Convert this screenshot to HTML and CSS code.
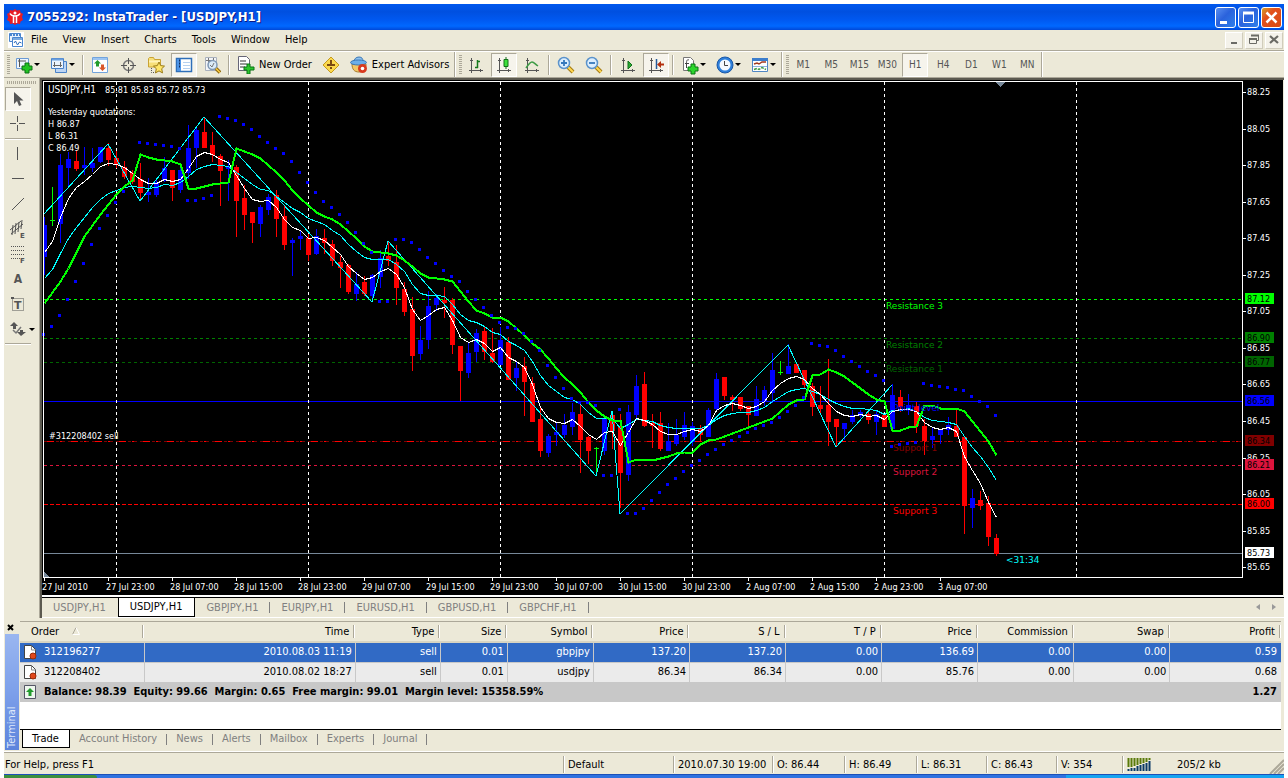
FILE: index.html
```html
<!DOCTYPE html>
<html lang="en">
<head>
<meta charset="utf-8">
<title>7055292: InstaTrader - [USDJPY,H1]</title>
<link rel="stylesheet" href="styles.css">
</head>
<body>
<div class="window">
  <header class="titlebar">
    <svg class="logo" width="16" height="16" viewBox="0 0 16 16"><path d="M8 0l2 1.500 3-.5.5 2.500L16 5l-1 3 1 3-2.500 1.500L13 15l-3-.5L8 16l-2-1.500L3 15l-.5-2.500L0 11l1-3-1-3 2.500-1.500L3 1l3 .5z" fill="#e81c24"/><circle cx="8" cy="4" r="1.500" fill="#fff"/><path d="M3 4.500c1 2 3 2.500 5 2.500s4-.5 5-2.500M6.500 7v7M9.500 7v7" stroke="#fff" stroke-width="1.500" fill="none"/></svg>
    <h1>7055292: InstaTrader - [USDJPY,H1]</h1>
    <div class="winbtns">
      <button class="wb" aria-label="Minimize"><svg width="19" height="19"><path d="M4 13h7v3H4z" fill="#fff"/></svg></button>
      <button class="wb" aria-label="Maximize"><svg width="19" height="19"><path d="M4.500 4v10.500h10V4" stroke="#fff" fill="none"/><path d="M4 5h11" stroke="#fff" stroke-width="3"/></svg></button>
      <button class="wb close" aria-label="Close"><svg width="19" height="19"><path d="M4.500 4.500l10 10M14.500 4.500l-10 10" stroke="#fff" stroke-width="2.500"/></svg></button>
    </div>
  </header>
  <nav class="menubar">
    <svg width="16" height="16"><rect width="16" height="16" fill="#fff"/><path d="M1.500 1.500h11v8h-11z" fill="#e8f1fc" stroke="#4a86cf"/><path d="M4.500 5.500h10v9h-10z" fill="#fff" stroke="#4a86cf"/><path d="M2 3h10" stroke="#4a86cf" stroke-width="2" stroke-dasharray="2 1"/><path d="M5 7h9" stroke="#7aaae0" stroke-width="2"/><path d="M6 11l1.500-2 2 4 2-3 2 1" stroke="#2e6dbd" fill="none"/></svg>
    <button>File</button><button>View</button><button>Insert</button><button>Charts</button><button>Tools</button><button>Window</button><button>Help</button>
    <div class="docbtns">
      <button aria-label="Minimize chart"><svg width="16" height="16"><path d="M5 10h6v2H5z" fill="#6b6b66"/></svg></button>
      <button aria-label="Restore chart"><svg width="16" height="16"><path d="M5.500 3.500h7v5h-2M3.500 7.500h7v4h-7z" fill="none" stroke="#6b6b66"/><path d="M5 3.500h8M3 7h8" stroke="#6b6b66" stroke-width="2"/></svg></button>
      <button aria-label="Close chart"><svg width="16" height="16"><path d="M4 4l8 7M12 4l-8 7" stroke="#6b6b66" stroke-width="2.200"/></svg></button>
    </div>
  </nav>

  <div class="toolbars">
    <div class="bar">
      <span class="grip"></span>
      <button class="dd" aria-label="New chart"><svg width="20" height="20"><path d="M2.500 3.500h12v10h-12z" fill="#eef5fd" stroke="#6b9ad4"/><path d="M4 6h8M5.500 4v8" stroke="#555"/><path d="M11 8h4v3h3v4h-3v3h-4v-3H8v-4h3z" fill="#22c422" stroke="#0a6e14"/></svg><i class="arr"></i></button>
      <button class="dd" aria-label="Profiles"><svg width="20" height="20"><path d="M6.500 6.500h11v11h-11z" fill="#bcd5f4" stroke="#4a82c8"/><path d="M2.500 3.500h12v10h-12z" fill="#eaf3fd" stroke="#4a82c8"/><path d="M3 4.500h11" stroke="#6ba0e0" stroke-width="2"/><path d="M4 10.500h9M5.500 7v5M11.500 7v5" stroke="#666"/></svg><i class="arr"></i></button>
      <span class="sep"></span>
      <button aria-label="Market Watch"><svg width="18" height="18"><path d="M1.500 1.500h15v15h-15z" fill="#fdfeff" stroke="#72a4dc"/><path d="M2 3h14" stroke="#9cc5f2" stroke-width="2"/><path d="M6.500 4l3.500 3.500H8v3H5v-3H3z" fill="#219b2b"/><path d="M11.500 15L8 11.500h2v-3h3v3h2z" fill="#d8572a"/></svg></button>
      <button aria-label="Data Window"><svg width="18" height="18"><circle cx="9.500" cy="9.500" r="5" fill="none" stroke="#777" stroke-width="1.500"/><path d="M9.500 2v6m0 3v6M2 9.500h6m3 0h6" stroke="#555"/></svg></button>
      <button aria-label="Navigator"><svg width="18" height="18"><path d="M1.500 11V2.500l1-1h4l1 2h6V11z" fill="#f7df78" stroke="#c9a334"/><path d="M2 5.500h11" stroke="#fff3b8" stroke-width="2"/><path d="M4.500 12v4.500H9" stroke="#555" stroke-dasharray="1 1" fill="none"/><path d="M12 6l1.700 3.600 3.800.5-2.800 2.600.8 4.200-3.500-2-3.500 2 .8-4.200-2.800-2.600 3.800-.5z" fill="#ffe669" stroke="#9a7a16"/></svg></button>
      <button class="on" aria-label="Terminal"><svg width="18" height="18"><path d="M1.500 2.500h15v13h-15z" fill="#fff" stroke="#2f6fb9" stroke-width="1.500"/><path d="M4 3v12" stroke="#4d94e6" stroke-width="4"/><path d="M8 6.500h7m-7 3h7m-7 3h7" stroke="#b7d1ef"/><path d="M4 4.500h1m-1 3h1m-1 3h1" stroke="#122f60" stroke-width="2"/></svg></button>
      <button aria-label="Strategy Tester"><svg width="18" height="18"><path d="M2.500 1.500h11v13h-11z" fill="#f3f5f8" stroke="#a9b1bd"/><path d="M5.500 2v10M10.500 2v3M3 4.500h8" stroke="#777"/><circle cx="9.500" cy="9" r="4.500" fill="#d6eaf9" fill-opacity=".85" stroke="#8099b5" stroke-width="1.500"/><path d="M7 9l2 2 2-4" stroke="#777" fill="none"/><path d="M13 12.500l4 4" stroke="#8a650c" stroke-width="3.500"/><path d="M13 12.500l4 4" stroke="#ffcf45" stroke-width="1.500"/></svg></button>
      <span class="sep"></span>
      <button class="txt"><svg width="18" height="18"><path d="M1.500.5h8l3 3v11h-11z" fill="#fff" stroke="#667"/><path d="M3 5h6M3 8h7M3 11h5" stroke="#777" stroke-width="1.500"/><path d="M10 8h3v3h4v3h-4v4h-3v-4H7v-3h3z" fill="#2cc52c" stroke="#0a7414"/></svg>New Order</button>
      <button aria-label="MetaEditor"><svg width="18" height="18"><path d="M9 1l8 8-8 8-8-8z" fill="#fbd84d" stroke="#c49a1c"/><path d="M9 4v5m0 2v2M5 9h8" stroke="#7b4a12" stroke-width="2"/></svg></button>
      <button class="txt"><svg width="18" height="18"><path d="M2 8c0 5 2 8 7 8s7-4 7-8z" fill="#f3c766" stroke="#a97b2a"/><path d="M4 6c0-3 2-5 5-5s4 2 4 4" fill="#8ec2ee" stroke="#3c77b5"/><ellipse cx="8.500" cy="6.500" rx="8" ry="2.500" fill="#6daee8" stroke="#3c77b5"/><circle cx="12.500" cy="12.500" r="4.500" fill="#d83a1e"/><circle cx="12.500" cy="12.500" r="1.800" fill="#fff"/></svg>Expert Advisors</button>
    </div>
    <div class="bar">
      <span class="grip"></span>
      <button aria-label="Bar chart"><svg width="18" height="18"><path d="M4.500 2v15M2 14.500h14M3 4.500h3M13.500 13v3" stroke="#555"/><path d="M10.500 4v8M8 11.500h3M10 5.500h3" stroke="#167a1c" stroke-width="1.500"/></svg></button>
      <button class="on" aria-label="Candlesticks"><svg width="18" height="18"><path d="M4.500 2v15M2 14.500h14M3 4.500h3M13.500 13v3" stroke="#555"/><path d="M11 1v12" stroke="#127018"/><path d="M9 3.500h4v7H9z" fill="#3be03b" stroke="#127018"/></svg></button>
      <button aria-label="Line chart"><svg width="18" height="18"><path d="M4.500 2v15M2 14.500h14M3 4.500h3M13.500 13v3" stroke="#555"/><path d="M3 12c2-3 4-6 6-6s3 2 6 4" stroke="#3d9b45" fill="none" stroke-width="1.500"/></svg></button>
      <span class="sep"></span>
      <button aria-label="Zoom In"><svg width="18" height="18"><path d="M11 11l5 5" stroke="#a67c12" stroke-width="4"/><path d="M11 11l5 5" stroke="#ffd750" stroke-width="2"/><circle cx="7" cy="7" r="5.500" fill="#dceefe" stroke="#5b93cb" stroke-width="1.500"/><path d="M4 7h6M7 4v6" stroke="#3578bc" stroke-width="1.800"/></svg></button>
      <button aria-label="Zoom Out"><svg width="18" height="18"><path d="M11 11l5 5" stroke="#a67c12" stroke-width="4"/><path d="M11 11l5 5" stroke="#ffd750" stroke-width="2"/><circle cx="7" cy="7" r="5.500" fill="#dceefe" stroke="#5b93cb" stroke-width="1.500"/><path d="M4 7h6" stroke="#3578bc" stroke-width="1.800"/></svg></button>
      <span class="sep"></span>
      <button aria-label="Auto Scroll"><svg width="18" height="18"><path d="M4.500 2v15M2 14.500h14M3 4.500h3M13.500 13v3" stroke="#555"/><path d="M9 5l4 4-4 4z" fill="#29a832" stroke="#11701a"/></svg></button>
      <button class="on" aria-label="Chart Shift"><svg width="18" height="18"><path d="M4.500 2v15M2 14.500h14M3 4.500h3M13.500 13v3" stroke="#555"/><path d="M9.500 3v10" stroke="#235a9c" stroke-width="1.500"/><path d="M10 8.500l4-3.500v2.500h3v2h-3V12z" fill="#b3300f"/></svg></button>
      <span class="sep"></span>
      <button class="dd" aria-label="Indicators"><svg width="20" height="20"><path d="M3.500 2.500h7l3 3v10h-10z" fill="#fff" stroke="#777"/><path d="M9 5c-2-1-2.500 1-2.500 3v5M5 8.500h4" stroke="#444" fill="none"/><path d="M11 9h4v3h3v4h-3v3h-4v-3H8v-4h3z" fill="#2cd52c" stroke="#0a7414"/></svg><i class="arr"></i></button>
      <button class="dd" aria-label="Periods"><svg width="20" height="20"><circle cx="10" cy="10" r="8" fill="#2e80dc" stroke="#1b58a6"/><circle cx="10" cy="10" r="5.500" fill="#f4f9ff"/><path d="M9.500 6v4.500H13" stroke="#444" fill="none"/></svg><i class="arr"></i></button>
      <button class="dd" aria-label="Templates"><svg width="20" height="20"><path d="M2.500 3.500h15v13h-15z" fill="#fff" stroke="#5087c4"/><path d="M2 4.500h16" stroke="#3b7dcc" stroke-width="3"/><path d="M3 11.500h14" stroke="#8eb4e0"/><path d="M4 9l3-1 2 1 3-2h4" stroke="#a23a1e" fill="none" stroke-width="1.500"/><path d="M4 14.500l3-1 2 1 3-2 4 2" stroke="#3d9b45" fill="none" stroke-width="1.500" stroke-dasharray="3 1"/></svg><i class="arr"></i></button>
    </div>
    <div class="bar periods">
      <span class="grip"></span>
      <button>M1</button><button>M5</button><button>M15</button><button>M30</button><button class="on">H1</button><button>H4</button><button>D1</button><button>W1</button><button>MN</button>
    </div>
  </div>

  <main class="work">
    <div class="tools">
      <span class="hgrip"></span>
      <button class="on" aria-label="Cursor"><svg width="22" height="22"><path d="M7 4v12l3-3 2 5 2.500-1-2-4.500h4z" fill="#555"/></svg></button>
      <button aria-label="Crosshair"><svg width="22" height="22"><path d="M10.500 3v6m0 3v6M3 10.500h6m3 0h6" stroke="#555"/></svg></button>
      <span class="hsep"></span>
      <button aria-label="Vertical Line"><svg width="22" height="22"><path d="M10.500 4v13" stroke="#555"/></svg></button>
      <button aria-label="Horizontal Line"><svg width="22" height="22"><path d="M5 10.500h12" stroke="#555"/></svg></button>
      <button aria-label="Trendline"><svg width="22" height="22"><path d="M5 17L17 5" stroke="#555"/></svg></button>
      <button aria-label="Equidistant Channel"><svg width="22" height="22"><path d="M3 12L14 3M4 16L16 6M6 7L5 17M9 5L8 16M12 4l-1 10M15 2l-1 9" stroke="#555"/><text x="13" y="20" class="tiny">E</text></svg></button>
      <button aria-label="Fibonacci"><svg width="22" height="22"><path d="M4 3.500h13M4 7.500h13M4 11.500h13M4 15.500h9" stroke="#555" stroke-dasharray="1 1"/><text x="13" y="20" class="tiny">F</text></svg></button>
      <button class="glyph">A</button>
      <button aria-label="Text Label"><svg width="22" height="22"><path d="M5.500 5.500h11v12h-11z" fill="none" stroke="#555" stroke-dasharray="1 1"/><path d="M4 4h3v2H4z" fill="#555"/><text x="7" y="16" class="tee">T</text></svg></button>
      <button class="more" aria-label="Arrows"><svg width="22" height="22"><path d="M7 4l4 4H9v3H6V8H3zM14 18l-4-4h3v-2h3v2h3z" fill="#555"/><path d="M6 12l3 3 5-6" stroke="#777" fill="none" stroke-width="1.500"/></svg><i class="arr"></i></button>
      <span class="hsep"></span>
    </div>
    <section class="chartpane">
      <svg class="chart" id="chart" role="img" aria-label="USDJPY H1 chart">
        <g transform="translate(-42 -80)" shape-rendering="crispEdges">
          <g id="grid"></g>
          <g id="candles"></g>
          <g id="lines" fill="none"></g>
          <path id="sar" stroke="#0000ff" stroke-width="3"/>
          <path d="M43.500 81.500H1242.500V577.500H43.500z" fill="none" stroke="#fff"/>
          <path d="M995 82h10l-5 5z" fill="#778899"/>
          <path d="M44 572v5h5z" fill="#778899"/>
          <g class="ctext" id="axis"></g>
          <g class="ctext">
            <text x="48" y="93" class="symbol">USDJPY,H1</text><text x="105" y="93">85.81 85.83 85.72 85.73</text>
            <text x="48" y="115">Yesterday quotations:</text>
            <text x="48" y="127">H 86.87</text><text x="48" y="139">L 86.31</text><text x="48" y="151">C 86.49</text>
            <text x="49" y="439">#312208402 sell</text>
          </g>
          <g class="level">
            <text x="886" y="309" fill="#00ff00">Resistance 3</text>
            <text x="886" y="348" fill="#008000">Resistance 2</text>
            <text x="886" y="372" fill="#006400">Resistance 1</text>
            <text x="893" y="411" fill="#0000ff">Point level</text>
            <text x="893" y="451" fill="#800000">Support 1</text>
            <text x="893" y="475" fill="#dc143c">Support 2</text>
            <text x="893" y="514" fill="#ff0000">Support 3</text>
            <text x="1006" y="563" fill="#00ffff">&lt;31:34</text>
          </g>
        </g>
      </svg>
      <div class="charttabs">
        <button>USDJPY,H1</button><button class="cur">USDJPY,H1</button><button class="bar-r">GBPJPY,H1</button><button class="bar-r">EURJPY,H1</button><button class="bar-r">EURUSD,H1</button><button class="bar-r">GBPUSD,H1</button><button class="bar-r">GBPCHF,H1</button>
        <span class="scroll"><i class="tl"></i><i class="tr"></i></span>
      </div>
    </section>
  </main>

  <section class="terminal">
    <div class="side">
      <button aria-label="Close terminal"><svg width="8" height="8"><path d="M1 1l5 5M6 1L1 6" stroke="#000" stroke-width="2"/></svg></button>
      <div class="caption">Terminal</div>
    </div>
    <div class="panel">
      <table>
        <colgroup><col class="w124"><col class="w211"><col class="w85"><col class="w67"><col class="w86"><col class="w96"><col class="w96"><col class="w96"><col class="w96"><col class="w96"><col class="w96"><col class="w111"></colgroup>
        <thead><tr><th class="first">Order <svg width="9" height="8"><path d="M.5 7.500L4 .5" stroke="#aca899" fill="none"/><path d="M4 .5l3.500 7H.5" stroke="#fff" fill="none"/></svg></th><th>Time</th><th>Type</th><th>Size</th><th>Symbol</th><th>Price</th><th>S / L</th><th>T / P</th><th>Price</th><th>Commission</th><th>Swap</th><th>Profit</th></tr></thead>
        <tbody>
          <tr class="sel"><td class="first"><svg width="16" height="16"><path d="M2.500 1.500h7l4 4v9h-11z" fill="#fff" stroke="#444"/><path d="M9.500 2v4h4" fill="none" stroke="#888"/><circle cx="11" cy="12" r="3" fill="#e0481c" stroke="#9c2c0a"/></svg>312196277</td><td>2010.08.03 11:19</td><td>sell</td><td>0.01</td><td>gbpjpy</td><td>137.20</td><td>137.20</td><td>0.00</td><td>136.69</td><td>0.00</td><td>0.00</td><td>0.59</td></tr>
          <tr><td class="first"><svg width="16" height="16"><path d="M2.500 1.500h7l4 4v9h-11z" fill="#fff" stroke="#444"/><path d="M9.500 2v4h4" fill="none" stroke="#888"/><circle cx="11" cy="12" r="3" fill="#e0481c" stroke="#9c2c0a"/></svg>312208402</td><td>2010.08.02 18:27</td><td>sell</td><td>0.01</td><td>usdjpy</td><td>86.34</td><td>86.34</td><td>0.00</td><td>85.76</td><td>0.00</td><td>0.00</td><td>0.68</td></tr>
        </tbody>
        <tfoot><tr><td colspan="11" class="first"><svg width="16" height="16"><path d="M2.500 1.500h11v13h-11z" fill="#eef6ee" stroke="#556"/><path d="M8 4l4 4H9.500v4h-3V8H4z" fill="#229a2c"/></svg>Balance: 98.39&nbsp; Equity: 99.66&nbsp; Margin: 0.65&nbsp; Free margin: 99.01&nbsp; Margin level: 15358.59%</td><td>1.27</td></tr></tfoot>
      </table>
      <div class="blank"></div>
      <div class="termtabs"><button class="cur">Trade</button><button>Account History</button><button>News</button><button>Alerts</button><button>Mailbox</button><button>Experts</button><button>Journal</button></div>
    </div>
  </section>

  <footer class="status">
    <span class="help">For Help, press F1</span><span class="s110">Default</span><span class="s98">2010.07.30 19:00</span><span class="s72">O: 86.44</span><span class="s72">H: 86.49</span><span class="s70">L: 86.31</span><span class="s70">C: 86.43</span><span class="s66">V: 354</span>
    <span class="conn"><svg width="24" height="13"><path d="M1.500 0v9m3-9v9m3-9v8m3-8v7m3-7v6m3-6v5m3-5v4m3-4v2" stroke="#5a7a0a" stroke-width="2"/><path d="M1.500 11v2m3-3v3m3-3v3m3-5v5m3-6v6m3-7v7m3-8v8m3-10v10" stroke="#0b3a66" stroke-width="2"/></svg>205/2 kb</span>
    <svg class="sizer" width="15" height="15"><path d="M1 15L15 1M5 15L15 5M9 15l6-6" stroke="#aca899" stroke-width="2"/></svg>
  </footer>
</div>
<div class="taskbar"><span></span><b></b></div>
<script src="chart.js"></script>
</body>
</html>
```
FILE: styles.css
```css
* { box-sizing: border-box; }
html, body { margin: 0; }
body {
  min-height: 100vh;
  display: flex;
  flex-direction: column;
  padding: 4px 4px 0;
  background: #fff;
  font: 11px/14px "DejaVu Sans Condensed", Tahoma, "DejaVu Sans", sans-serif;
  color: #000;
}
button {
  font: inherit;
  color: inherit;
  background: none;
  border: 0;
  padding: 0;
  display: flex;
  align-items: center;
  justify-content: center;
  white-space: nowrap;
}
svg { display: block; flex: none; }
.window { flex: 1; display: flex; flex-direction: column; background: #ece9d8; }

.titlebar {
  height: 26px;
  display: flex;
  align-items: center;
  padding: 0 2px 0 3px;
  background: linear-gradient(#0058ee, #0050e0 30%, #0058f0 60%, #0068ff 85%, #0048d8);
  color: #fff;
}
.titlebar h1 {
  flex: 1;
  margin: 0 0 0 4px;
  font: bold 13px/18px "DejaVu Sans Condensed", "Trebuchet MS", sans-serif;
  text-shadow: 1px 1px 0 #0a1883;
}
.winbtns { display: flex; gap: 2px; }
.wb {
  width: 21px;
  height: 21px;
  border: 1px solid #fff;
  border-radius: 3px;
  background: linear-gradient(135deg, #5a8ff0, #2a62dc 45%, #2f80ea);
}
.wb.close { background: linear-gradient(135deg, #d4a028, #e2501c 35%, #d84a14); }

.menubar { height: 20px; display: flex; align-items: center; padding: 0 1px 0 4px; }
.menubar > button { padding: 0; margin-right: 15px; }
.menubar > svg { margin-right: 7px; }
.docbtns { margin-left: auto; display: flex; gap: 2px; }
.docbtns button {
  width: 18px;
  height: 17px;
  background: #f4f2ea;
  border: 1px solid #fff;
  border-right-color: #d0ccbc;
  border-bottom-color: #d0ccbc;
}

.toolbars {
  display: flex;
  height: 28px;
  border-top: 1px solid #aca899;
  border-bottom: 1px solid #aca899;
  box-shadow: inset 0 1px #fff;
  padding-top: 1px;
}
.bar {
  display: flex;
  align-items: center;
  border-right: 1px solid #aca899;
  box-shadow: 1px 0 #fff;
  margin-right: 1px;
}
.bar button { width: 26px; height: 24px; margin: 0 1px; }
.bar button.dd { width: 33px; padding-right: 2px; }
.bar button.txt { width: auto; padding: 0 4px; gap: 4px; }
.periods { color: #555; font-size: 10px; }
.bar .on, .tools .on {
  background: #f6f4ec;
  border: 1px solid #aca899;
  border-right-color: #fff;
  border-bottom-color: #fff;
}
.grip {
  width: 3px;
  height: 20px;
  margin: 0 0 0 3px;
  background: repeating-linear-gradient(#aca899 0 1px, #ece9d8 1px 2px);
}
.sep {
  width: 2px;
  height: 20px;
  margin: 0 2px;
  background: #aca899;
  border-right: 1px solid #fff;
}
.arr { border: 3px solid transparent; border-top-color: #000; border-bottom: 0; }

.work { display: flex; }
.tools {
  width: 36px;
  padding: 3px 0 0 1px;
  border-right: 1px solid #aca899;
  color: #555;
}
.tools button { width: 26px; height: 24px; margin: 1px 0; }
.tools button.more { width: 32px; justify-content: flex-start; padding-left: 2px; }
.hgrip {
  display: block;
  width: 29px;
  height: 3px;
  margin: 0 0 3px 2px;
  background: repeating-linear-gradient(90deg, #aca899 0 1px, #ece9d8 1px 2px);
}
.hsep { display: block; height: 2px; width: 26px; margin: 2px 0; background: #aca899; border-bottom: 1px solid #fff; }
.tiny { font: bold 7px "DejaVu Sans", sans-serif; fill: #555; }
.tee { font: bold 11px "DejaVu Sans", sans-serif; fill: #555; }
.glyph { font-size: 12px; font-weight: bold; }

.chartpane { flex: 1; min-width: 0; border-left: 2px solid #5c5a50; border-top: 2px solid #5c5a50; }
.chart { width: 100%; height: 517px; background: #000; border-right: 1px solid #ece9d8; border-bottom: 2px solid #fff; }
.ctext { font: 9px "DejaVu Sans Condensed", Tahoma, sans-serif; fill: #fff; }
.symbol { font-size: 10px; }
.level { font: 9px "DejaVu Sans", Verdana, sans-serif; }

.charttabs {
  display: flex;
  align-items: flex-start;
  height: 21px;
  border-top: 1px solid #000;
  border-bottom: 1px solid #fff;
  color: #808080;
}
.charttabs button { height: 19px; padding: 0 12px 0 11px; position: relative; }
.charttabs .cur, .termtabs .cur {
  background: #fff;
  color: #000;
  border: 1px solid #000;
  border-top: 0;
}
.charttabs .bar-r::after, .termtabs button:not(.cur)::after {
  content: "";
  position: absolute;
  right: 0;
  top: 4px;
  height: 11px;
  border-right: 1px solid #808080;
}
.scroll { margin: 6px 8px 0 auto; display: flex; gap: 12px; }
.scroll i { border: 3px solid transparent; }
.scroll .tl { border-right: 4px solid #999; border-left: 0; }
.scroll .tr { border-left: 4px solid #999; border-right: 0; }

.terminal { flex: 1; display: flex; margin-top: 3px; border-bottom: 1px solid #fff; }
.side { width: 16px; display: flex; flex-direction: column; padding: 0 1px 1px; }
.side button { width: 12px; height: 13px; }
.caption {
  flex: 1;
  writing-mode: vertical-rl;
  transform: rotate(180deg);
  background: linear-gradient(#5d84dc, #7da0ea 50%, #9ab6f0);
  color: #dfe8fa;
  line-height: 14px;
  padding-top: 2px;
}
.panel {
  flex: 1;
  min-width: 0;
  display: flex;
  flex-direction: column;
  margin-right: 3px;
  border-top: 1px solid #aca899;
}
table { width: 100%; table-layout: fixed; border-collapse: collapse; }
.w124 { width: 124px; } .w211 { width: 211px; } .w85 { width: 85px; } .w67 { width: 67px; }
.w86 { width: 86px; } .w96 { width: 96px; } .w111 { width: 111px; }
th { height: 20px; padding: 0 6px 0 0; font-weight: normal; text-align: right;
  background: linear-gradient(90deg, #aca899 1px, #fff 1px) right center / 2px 13px no-repeat;
  border-bottom: 2px solid #d8d4c2; }
th.first { text-align: left; padding-left: 11px; }
th svg { display: inline-block; margin-left: 10px; }
td { height: 20px; padding: 0 3px 0 0; text-align: right; white-space: nowrap; border-right: 1px solid #c8c8c8; background: #ebebeb; }
td:last-child { border-right: 0; padding-right: 4px; }
td.first { text-align: left; padding-left: 2px; }
td.first svg { display: inline-block; vertical-align: middle; margin-right: 6px; }
tbody tr + tr td { border-top: 1px solid #c8c8c8; }
.sel td { background: #316ac5; color: #fff; }
tfoot td { background: #c8c8c8; font-weight: bold; border: 0; }
.blank { flex: 1; background: #fff; min-height: 20px; }
.termtabs { display: flex; align-items: flex-start; height: 22px; border-top: 1px solid #000; color: #808080; padding-left: 2px; }
.termtabs button { height: 18px; position: relative; padding: 0 10px 0 9px; }

.status {
  display: flex;
  align-items: center;
  height: 22px;
  border-top: 1px solid #aca899;
  padding: 2px 0 0 1px;
  position: relative;
}
.status > span { height: 17px; line-height: 17px; border-left: 1px solid #aca899; box-shadow: inset 1px 0 #fff; padding-left: 4px; white-space: nowrap; }
.status > .help { flex: 1; border: 0; box-shadow: none; padding: 0; }
.s110 { width: 110px; } .s98 { width: 99px; } .s72 { width: 72px; } .s70 { width: 70px; } .s66 { width: 66px; }
.status > .conn { width: 162px; display: flex; align-items: center; gap: 26px; }
.sizer { position: absolute; right: 0; bottom: 0; }
.taskbar { height: 4px; display: flex; background: #2f72e0; border-top: 1px solid #1c50b8; }
.taskbar span { width: 93px; background: #3c8f3c; border-radius: 0 4px 0 0; }
.taskbar b { width: 218px; margin-left: auto; background: #16a4f0; }
```
FILE: chart.js
```js
const NS = "http://www.w3.org/2000/svg";
const STEP = 8, X0 = 44;
const add = (parent, tag, attrs, text) => {
  const e = document.createElementNS(NS, tag);
  for (const k in attrs) e.setAttribute(k, attrs[k]);
  if (text) e.textContent = text;
  document.getElementById(parent).appendChild(e);
  return e;
};

// Horizontal levels: y, colour, dash
[[299, "#00ff00", "3 3"], [338, "#008000", "3 3"], [362, "#006400", "3 3"], [401, "#0000ff", "none"],
 [441, "#800000", "10 2 3 1 5 3"], [465, "#dc143c", "3 3"], [504, "#ff0000", "4 2"], [553, "#778899", "none"]
].forEach(([y, c, d]) => add("grid", "path", { d: `M44 ${y}.5H1242`, stroke: c, "stroke-dasharray": d }));
add("grid", "path", { d: "M47 441.5H1242", stroke: "#ff0000", "stroke-dasharray": "7 6 2 9" });
for (let x = 116; x < 1242; x += 192) add("grid", "path", { d: `M${x}.5 82V577`, stroke: "#fff", "stroke-dasharray": "3 3" });

// Candles: colour, high, body top, body bottom, low
const candles = `b217 225 257 275,g187 220 220 226,b154 165 224 243,b152 159 168 186,r150 161 169 171,b147 165 168 175,b148 163 168 172,b147 147 162 163,r143 148 160 166,r151 158 165 168,r161 167 177 179,r170 173 182 184,r163 179 193 201,b178 192 195 202,b180 182 195 197,b157 168 181 182,r170 170 188 201,b164 170 190 193,b125 148 173 179,b126 130 148 168,r117 132 148 148,r132 145 155 162,r154 156 171 206,b160 166 169 201,r165 167 201 237,r185 198 215 230,r212 212 223 243,b205 207 224 237,b194 197 210 215,r190 195 219 237,r205 216 245 250,b238 240 243 276,b230 236 239 250,r234 238 255 261,b229 236 254 255,r229 238 243 254,r240 244 261 266,r256 262 268 288,r264 265 292 294,b272 284 294 301,r276 282 294 296,b274 275 296 300,b250 258 277 288,r241 256 261 266,r245 262 288 305,r282 289 312 316,r297 309 356 371,b326 340 354 360,b291 306 340 349,b294 298 305 311,r287 300 303 318,r298 300 345 354,r346 346 371 401,b343 353 373 378,b329 333 352 362,r326 331 352 360,r328 353 362 363,b327 340 365 365,r337 342 380 380,b362 368 378 391,r357 366 382 416,r377 383 422 422,r408 419 451 457,b434 436 453 457,b423 432 435 446,b414 425 435 438,b403 412 427 435,r405 414 440 473,r436 437 451 464,g447 448 448 474,b417 418 451 455,r413 415 431 449,r414 426 473 508,b405 412 475 481,b375 386 415 419,r372 384 426 427,r414 423 426 448,r412 423 449 451,b423 441 451 451,b419 435 444 446,b412 425 437 440,b422 426 442 446,r425 428 435 442,b408 410 437 437,b373 379 409 410,r377 377 396 400,r395 397 400 411,r397 397 409 411,r406 406 415 427,b386 399 416 416,b386 390 401 406,b353 370 393 403,g361 372 372 375,b344 366 374 374,r362 364 373 373,r370 370 385 388,r383 386 407 416,r386 405 409 415,r359 405 422 446,r419 419 427 446,b423 423 429 440,b410 415 422 424,b410 412 416 418,r410 414 420 424,b411 414 422 435,r414 415 427 427,b384 395 429 430,r390 397 407 412,b394 405 410 415,r402 406 426 433,r419 426 441 455,b428 436 440 448,b430 430 435 444,b417 425 430 435,r408 426 437 437,r437 437 506 534,b489 498 508 528,r491 500 506 510,r496 503 537 546,r534 538 554 556`.split(",");
const colours = { b: "#0000ff", r: "#ff0000", g: "#00ff00" };
candles.forEach((c, i) => {
  const [h, t, b, l] = c.slice(1).split(" ").map(Number);
  const x = X0 + i * STEP, left = Math.max(44, x - 2);
  add("candles", "path", { fill: colours[c[0]], d: `M${x} ${h}h1V${l}h-1zM${left} ${t}H${x + 3}V${Math.max(b, t + 1)}H${left}z` });
});

// Moving averages, one value per bar
const fast = "252 241 217 198 187 181 174 166 163 164 167 173 179 183 183 179 181 179 168 156 152 154 159 162 175 188 199 201 200 207 219 227 230 238 237 240 247 254 266 273 279 277 271 268 274 287 309 320 315 309 307 320 337 342 339 343 351 347 357 361 367 384 407 418 422 423 419 426 434 439 432 431 445 432 418 420 424 431 434 434 431 429 431 425 410 405 403 405 408 406 401 390 383 378 376 379 388 394 403 411 415 416 414 416 415 419 411 409 409 411 422 427 429 427 431 456 470 483 502 517";
const mid = "278 269 253 238 227 217 207 199 193 190 187 186 187 188 187 184 185 182 176 169 166 164 165 166 172 178 184 189 190 196 202 208 212 218 221 224 230 235 244 251 257 259 259 259 264 271 284 293 295 295 296 304 314 320 322 326 332 334 341 345 350 361 375 385 391 397 399 404 412 418 418 418 428 424 419 420 421 425 427 428 428 428 428 425 419 415 413 412 412 410 407 401 396 391 389 388 391 394 399 403 406 408 408 409 410 414 410 410 408 411 417 420 421 422 424 436 447 456 467 480";
const slow = "303 292 281 268 252 236 225 214 204 194 186 180 154 157 159 160 161 164 188 188 186 184 183 182 148 151 154 158 165 172 180 190 198 205 212 216 219 224 231 238 246 251 252 253 255 260 266 273 277 278 279 281 291 301 310 313 317 317 321 328 335 343 349 358 368 377 384 392 402 410 416 420 420 462 459 459 460 458 456 453 452 452 444 440 439 436 433 430 427 424 421 418 411 404 400 399 375 374 369 372 376 382 388 394 399 401 430 430 427 426 405 405 408 408 408 411 421 431 441 455";
const line = (vals, stroke, w) => add("lines", "polyline", {
  points: vals.split(" ").map((v, i) => `${X0 + i * STEP + .5},${+v + .5}`).join(" "), stroke, "stroke-width": w
});
add("lines", "polyline", { stroke: "#00ffff", points: "44,214 108,144 140,201 204,117 372,302 388,241 596,476 612,411 620,514 788,345 836,447 892,385" });
line(mid, "#00ffff", 1);
line(fast, "#ffffff", 1);
line(slow, "#00ff00", 2);

// Parabolic SAR, one value per bar; 0 where no dot is drawn
const sar = "334 326 315 299 281 263 244 228 215 202 191 0 142 143 144 145 146 148 200 200 198 195 116 118 120 124 129 136 142 148 153 161 172 182 192 201 207 214 222 232 243 252 301 301 239 239 242 249 257 263 270 276 281 291 299 307 315 322 327 328 333 341 350 365 377 388 398 402 402 405 475 475 409 513 513 508 500 492 484 478 471 465 460 454 449 444 440 436 432 428 425 422 417 411 405 397 343 345 346 350 356 361 366 371 375 380 446 444 443 442 383 385 386 387 389 390 396 401 406 415";
document.getElementById("sar").setAttribute("d", sar.split(" ").map((v, i) => +v ? `M${X0 + i * STEP - 2} ${v}.5h3` : "").join(""));

// Time axis
["27 Jul 2010", "27 Jul 23:00", "28 Jul 07:00", "28 Jul 15:00", "28 Jul 23:00", "29 Jul 07:00", "29 Jul 15:00", "29 Jul 23:00",
 "30 Jul 07:00", "30 Jul 15:00", "30 Jul 23:00", "2 Aug 07:00", "2 Aug 15:00", "2 Aug 23:00", "3 Aug 07:00"].forEach((t, i) => {
  add("axis", "path", { d: `M${X0 + i * 64}.5 578v3`, stroke: "#fff" });
  add("axis", "text", { x: X0 + i * 64 - 2, y: 590 }, t);
});
// Price axis
for (let i = 0; i < 14; i++) {
  const y = Math.round(92 + i * 36.55);
  add("axis", "path", { d: `M1243 ${y}.5h3`, stroke: "#fff" });
  add("axis", "text", { x: 1247, y: y + 3 }, (88.25 - i * .2).toFixed(2));
}
[[299, "87.12", "#00ff00"], [338, "86.90", "#008000"], [362, "86.77", "#006400"], [401, "86.56", "#0000ff"],
 [441, "86.34", "#800000"], [465, "86.21", "#dc143c"], [504, "86.00", "#ff0000"], [553, "85.73", "#ffffff"]].forEach(([y, t, c]) => {
  add("axis", "rect", { x: 1245, y: y - 6, width: 29, height: 11, fill: c });
  add("axis", "text", { x: 1247, y: y + 3, style: "fill:#000" }, t);
});
```
